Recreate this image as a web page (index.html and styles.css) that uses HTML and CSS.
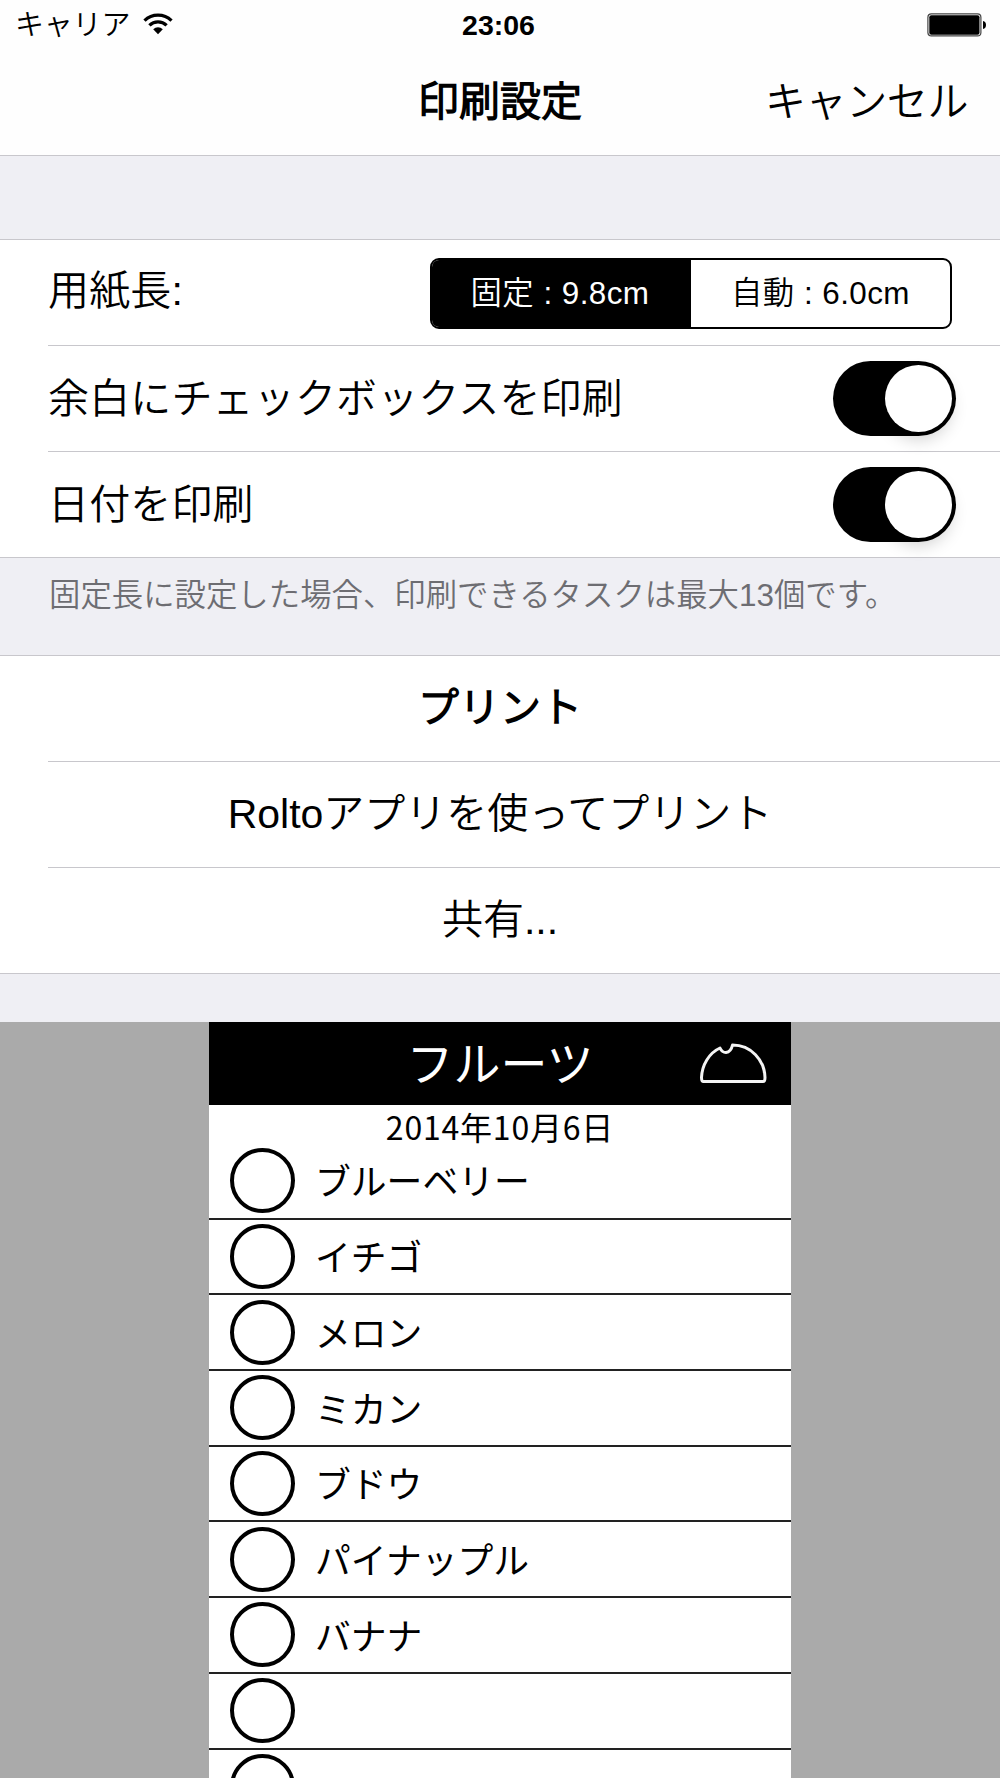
FILE: index.html
```html
<!DOCTYPE html>
<html lang="ja">
<head>
<meta charset="utf-8">
<title>印刷設定</title>
<link rel="stylesheet" href="styles.css">
</head>
<body>
<header class="top">
  <div class="status">
    <div class="carrier"><span>キャリア</span>
      <svg class="wifi" width="30" height="22" viewBox="0 0 30 22">
        <path d="M1.500 7.600A19.600 19.600 0 0 1 28.500 7.600" fill="none" stroke="#000" stroke-width="3.300"/>
        <path d="M6.400 12.400A12.400 12.400 0 0 1 23.600 12.400" fill="none" stroke="#000" stroke-width="3.300"/>
        <path d="M10.200 16.200A7 7 0 0 1 19.800 16.200L15 21.300Z"/>
      </svg>
    </div>
    <span class="clock">23:06</span>
    <svg class="battery" width="60" height="24" viewBox="0 0 60 24">
      <rect x=".9" y=".9" width="53" height="22" rx="3.500" fill="#fff" stroke="#444" stroke-width="1.200"/>
      <rect x="2.300" y="2.300" width="50.200" height="19.400" rx="2"/>
      <path d="M56 8q3 .6 3 4t-3 4z"/>
    </svg>
  </div>
  <div class="nav">
    <h1 class="title">印刷設定</h1>
    <span class="cancel">キャンセル</span>
  </div>
</header>
<main>
  <section class="group settings">
    <div class="row">
      <span class="label">用紙長:</span>
      <div class="segmented"><span class="seg on"><span class="seg-text">固定 : 9.8cm</span></span><span class="seg"><span class="seg-text">自動 : 6.0cm</span></span></div>
    </div>
    <div class="row"><span class="label">余白にチェックボックスを印刷</span><span class="switch"><span class="knob"></span></span></div>
    <div class="row"><span class="label">日付を印刷</span><span class="switch"><span class="knob"></span></span></div>
  </section>
  <p class="note">固定長に設定した場合、印刷できるタスクは最大13個です。</p>
  <section class="group actions">
    <div class="row"><b>プリント</b></div>
    <div class="row"><span>Roltoアプリを使ってプリント</span></div>
    <div class="row"><span>共有...</span></div>
  </section>
  <section class="preview">
    <div class="paper">
      <div class="paper-head">
        <span class="paper-title">フルーツ</span>
        <svg class="logo" width="67" height="41" viewBox="0 0 67 41">
          <path d="M3.500 38.500Q1.500 38.500 1.500 34.500C2 22 9 10 20 5Q22 9.500 26 9.500Q31 9 32.500 2C51 2 64.500 17 65 34.500Q65 38.500 63 38.500Z" fill="none" stroke="#f4f4f4" stroke-width="3" stroke-linejoin="round"/>
        </svg>
      </div>
      <div class="date">2014年10月6日</div>
      <ul class="list">
        <li class="item"><i class="ring"></i><span class="name">ブルーベリー</span></li>
        <li class="item"><i class="ring"></i><span class="name">イチゴ</span></li>
        <li class="item"><i class="ring"></i><span class="name">メロン</span></li>
        <li class="item"><i class="ring"></i><span class="name">ミカン</span></li>
        <li class="item"><i class="ring"></i><span class="name">ブドウ</span></li>
        <li class="item"><i class="ring"></i><span class="name">パイナップル</span></li>
        <li class="item"><i class="ring"></i><span class="name">バナナ</span></li>
        <li class="item"><i class="ring"></i></li>
        <li class="item"><i class="ring"></i></li>
      </ul>
    </div>
  </section>
</main>
</body>
</html>
```
FILE: styles.css
```css
* { box-sizing: border-box; }
body {
  margin: 0;
  width: 1000px;
  height: 1778px;
  overflow: hidden;
  background: #efeff4;
  color: #000;
  font: 350 41px/1 "Liberation Sans", "Noto Sans CJK JP DemiLight", "Noto Sans CJK JP", sans-serif;
}
.top {
  height: 156px;
  background: #fefefe;
  border-bottom: 1px solid #c8c7cc;
}
.status {
  display: grid;
  grid-template-columns: 1fr auto 1fr;
  align-items: center;
  height: 48px;
  padding: 2px 13px 0 15px;
  font-size: 29px;
}
.carrier { display: flex; align-items: center; gap: 13px; }
.carrier span { padding-top: 1px; letter-spacing: -0.200px; }
.wifi { margin-top: -2px; }
.clock { font-weight: 700; font-size: 28.500px; padding-right: 5px; }
.battery { justify-self: end; }
.nav {
  display: grid;
  grid-template-columns: 1fr auto 1fr;
  align-items: center;
  height: 106px;
  padding: 3px 32px 0;
}
.title { grid-column: 2; margin: 0; font-size: 41px; font-weight: 700; }
.cancel { justify-self: end; letter-spacing: -0.400px; }
.group {
  background: #fff;
  border-top: 1px solid #c8c7cc;
  border-bottom: 1px solid #c8c7cc;
}
.settings { margin-top: 83px; height: 319px; }
.row {
  display: flex;
  align-items: center;
  justify-content: space-between;
  height: 106px;
  margin-left: 48px;
  padding-right: 44px;
}
.row:first-child { height: 105px; }
.row + .row { border-top: 1px solid #c8c7cc; }
.label { letter-spacing: 0.150px; }
.row:first-child .label { margin-top: -2px; }
.row + .row .label { padding-top: 1px; }
.segmented {
  display: grid;
  grid-template-columns: 1fr 1fr;
  width: 522px;
  height: 71px;
  margin-top: 2px;
  margin-right: 4px;
  border: 2px solid #000;
  border-radius: 9px;
  overflow: hidden;
  font-size: 31.400px;
}
.seg { display: flex; align-items: center; justify-content: center; padding-top: 1px; letter-spacing: 0.450px; }
.on { background: #000; color: #fff; padding-right: 3px; }
.switch {
  display: flex;
  justify-content: flex-end;
  align-items: center;
  width: 123px;
  height: 75px;
  padding-right: 4px;
  border-radius: 38px;
  background: #000;
}
.knob {
  width: 67px;
  height: 67px;
  border-radius: 50%;
  background: #fff;
  box-shadow: 0 8px 16px rgba(0, 0, 0, .17);
}
.note {
  height: 97px;
  margin: 0;
  padding: 22px 0 0 49px;
  color: #6d6d72;
  font-size: 31.400px;
}
.actions { height: 319px; }
.actions .row { justify-content: center; padding-right: 48px; }
.actions b { font-weight: 700; }
.preview {
  display: flex;
  justify-content: center;
  height: 756px;
  margin-top: 48px;
  background: #aaa;
}
.paper { width: 582px; height: 756px; background: #fff; overflow: hidden; }
.paper-head {
  display: grid;
  grid-template-columns: 1fr auto 1fr;
  align-items: center;
  height: 83px;
  padding-right: 24px;
  padding-left: 24px;
  background: #000;
  color: #fff;
}
.paper-title { grid-column: 2; padding-bottom: 7px; font: 400 47px/1 "Noto Sans CJK JP", sans-serif; }
.logo { justify-self: end; }
.date {
  height: 39px;
  padding-top: 5px;
  text-align: center;
  font: 400 32px/1 "Noto Sans CJK JP", sans-serif;
  letter-spacing: 0.800px;
}
.list { margin: 0; padding: 0; list-style: none; }
.item {
  display: flex;
  align-items: center;
  gap: 20px;
  height: 75.700px;
  padding-left: 21px;
  border-bottom: 2px solid #222;
  font: 400 35.800px/1 "Noto Sans CJK JP", sans-serif;
}
.name { padding-bottom: 1px; }
.ring { width: 65px; height: 65px; border: 4.500px solid #000; border-radius: 50%; }
```
